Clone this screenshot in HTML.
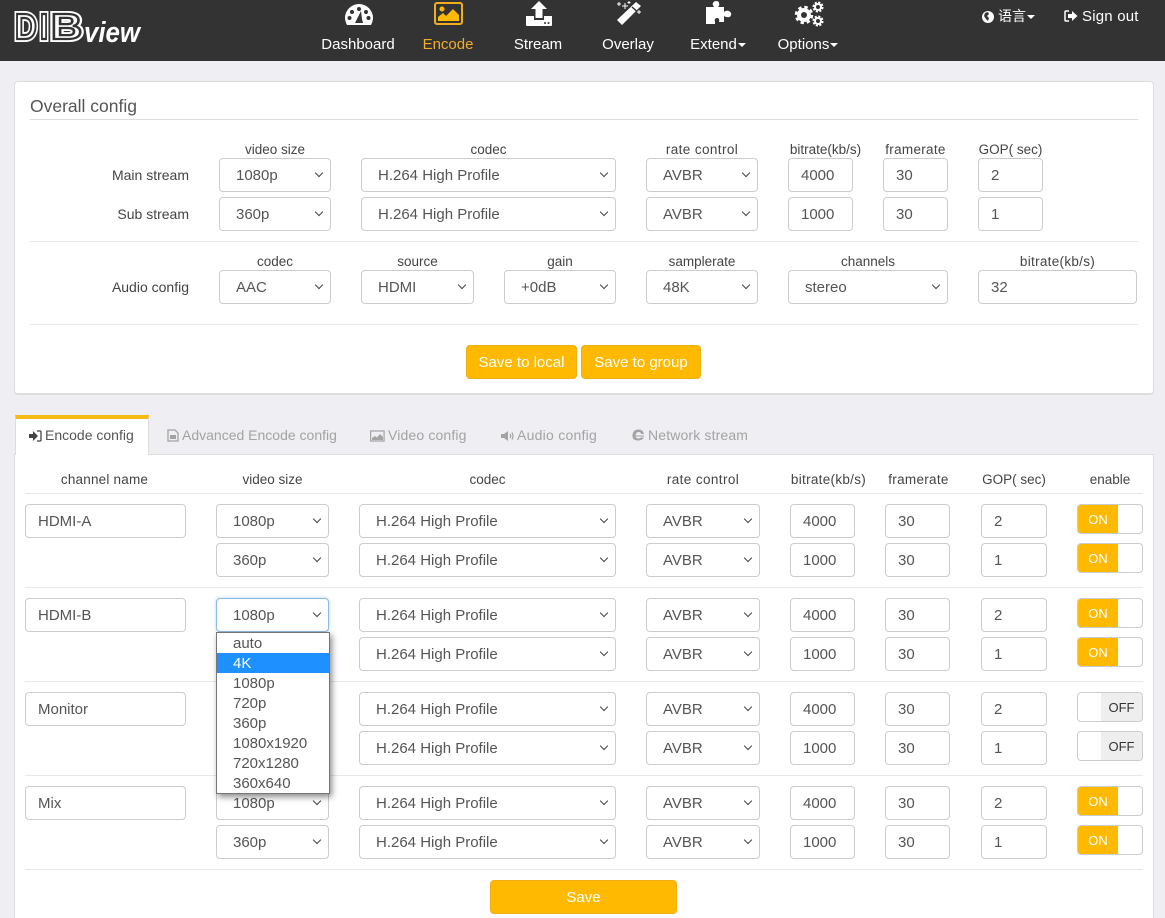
<!DOCTYPE html>
<html><head><meta charset="utf-8"><title>DIBview Encode</title>
<style>
*{box-sizing:border-box}
html,body{margin:0;padding:0}
html{width:1165px;height:918px;overflow:hidden}
body{width:1165px;height:918px;overflow:hidden;position:relative;background:#eeeef3;font-family:"Liberation Sans","Noto Sans CJK SC",sans-serif;font-size:15px;color:#555}
.a{position:absolute}
.nav{left:0;top:0;width:1165px;height:61px;background:#333}
.nl{position:absolute;top:35px;width:100px;text-align:center;color:#fff;font-size:15px;line-height:20px}
.caret{display:inline-block;width:0;height:0;border-left:4px solid transparent;border-right:4px solid transparent;border-top:4px solid #fff;vertical-align:middle;margin-left:1px}
.panel{position:absolute;background:#fff;border:1px solid #ddd}
.hr{position:absolute;height:1px;background:#e8e8e8}
.s,.i{position:absolute;height:34px;background:#fff;border:1px solid #ccc;border-radius:4px;line-height:34px;color:#555;font-size:15px;white-space:nowrap}
.s{padding-left:16px}
.i{padding-left:12px}
.s:after{content:"";position:absolute;right:8px;top:11px;width:5px;height:5px;border-right:1.8px solid #444;border-bottom:1.8px solid #444;transform:rotate(45deg)}
.l{position:absolute;text-align:center;font-size:13.5px;color:#444;line-height:18px;white-space:nowrap}
.w{letter-spacing:.4px}
.rl{position:absolute;left:60px;width:129px;text-align:right;font-size:14px;color:#444;line-height:20px}
.btn{position:absolute;height:34px;background:#ffb900;border:1px solid #efb014;border-radius:4px;color:#fff;text-align:center;line-height:33px;font-size:15px}
.tab{position:absolute;top:427px;font-size:14px;line-height:17px;color:#a3a3a3;white-space:nowrap}
.tab svg{vertical-align:-2px;margin-right:3px}
.sw{position:absolute;left:1077px;width:66px;height:30px;border:1px solid #ccc;border-radius:4px;background:#fff;overflow:hidden;font-size:13px;line-height:29px;text-align:center}
.on{position:absolute;left:0;top:0;width:40px;height:28px;background:#ffb900;color:#fff}
.off{position:absolute;right:0;top:0;width:41px;height:28px;background:#eee;color:#333}
.r{position:absolute;left:0;width:1165px;height:34px}
.m0{left:219px;width:112px}.m1{left:361px;width:255px}.m2{left:646px;width:112px}.m3{left:788px;width:65px}.m4{left:883px;width:65px}.m5{left:978px;width:65px}
.c0{left:216px;width:113px}.c1{left:359px;width:257px}.c2{left:646px;width:114px}.c3{left:790px;width:65px}.c4{left:885px;width:65px}.c5{left:981px;width:66px}
.dd{left:216px;top:632px;width:114px;height:162px;background:#fff;border:1px solid #767676;box-shadow:2px 3px 6px rgba(0,0,0,.45);z-index:5;font-size:15px;color:#555}
.dd div{height:20px;line-height:21px;padding-left:16px}
.dd .h{background:#1e90ff;color:#fff}
</style></head><body>
<div class="a nav"></div>
<svg class="a" style="left:10px;top:6px" width="140" height="42" viewBox="0 0 140 42">
<g font-family="Liberation Sans" font-size="36" font-weight="700" fill="none">
<g stroke="#fff" stroke-width="6"><text transform="translate(5 33) scale(.84 1)">D</text><text transform="translate(30 33) scale(.8 1)">I</text><text transform="translate(41 33) scale(1.2 1)">B</text></g>
<g stroke="#333" stroke-width="2.2"><text transform="translate(5 33) scale(.84 1)">D</text><text transform="translate(30 33) scale(.8 1)">I</text><text transform="translate(41 33) scale(1.2 1)">B</text></g>
</g>
<text x="74" y="36" font-family="Liberation Sans" font-style="italic" font-weight="700" font-size="29" fill="#fff" textLength="56" lengthAdjust="spacingAndGlyphs">view</text>
</svg>

<svg class="a" style="left:345px;top:4px" width="28" height="22" viewBox="0 0 28 22"><path d="M2 21Q0 17 0 14A14 14 0 0 1 28 14Q28 17 26 21Z" fill="#fff"/><g fill="#333"><circle cx="14" cy="5" r="2"/><circle cx="7" cy="8" r="2"/><circle cx="21" cy="8" r="2"/><circle cx="4.500" cy="14" r="2"/><circle cx="23.500" cy="14" r="2"/><path d="M16 7L17 15L18 19H10L12 15Z"/></g></svg>
<svg class="a" style="left:434px;top:2px" width="30" height="24" viewBox="0 0 30 24"><rect x="1" y="1" width="27" height="21" rx="2" fill="none" stroke="#f0ad1c" stroke-width="2"/><circle cx="8" cy="7" r="2.500" fill="#ffb900"/><path d="M4 19V15L9 11L12 14L19 7L25 13V19Z" fill="#ffb900"/></svg>
<svg class="a" style="left:526px;top:1px" width="26" height="25" viewBox="0 0 26 25"><path d="M13 0L21 8H16.500V17H9.500V8H5Z" fill="#fff"/><path d="M0 15H8V19H18V15H26V24Q26 25 25 25H1Q0 25 0 24Z" fill="#fff"/><circle cx="19" cy="22" r="1" fill="#333"/><circle cx="22.500" cy="22" r="1" fill="#333"/></svg>
<svg class="a" style="left:616px;top:0" width="27" height="26" viewBox="0 0 27 26"><path d="M20 2L25 6L6 25L1 20Z" fill="#fff"/><path d="M16 7L20.500 11" stroke="#333" stroke-width="1.500"/><path d="M3 2V6M1 4H5M9 3V9M6 6H12M13 1V4M11.500 2.500H14.500M23 10V14M21 12H25" stroke="#fff" stroke-width="1"/></svg>
<svg class="a" style="left:705px;top:1px" width="28" height="24" viewBox="0 0 28 24"><path d="M1 6H9Q7 3 8 2Q9 0 11 0Q14 0 14 2Q15 4 13 6H19V11Q21 9 24 10Q27 12 26 14Q25 17 22 16Q20 16 19 15V21H14Q15 17 12 17Q9 17 10 21V23H1Z" fill="#fff"/></svg>
<svg class="a" style="left:793px;top:1px" width="31" height="28" viewBox="0 0 31 28" fill="none" stroke="#fff"><circle cx="11" cy="14" r="5" stroke-width="4"/><circle cx="11" cy="14" r="8" stroke-width="2.500" stroke-dasharray="3.400 2.900"/><circle cx="25" cy="6" r="3" stroke-width="2"/><circle cx="25" cy="6" r="4.700" stroke-width="1.700" stroke-dasharray="2.200 1.500"/><circle cx="25" cy="20" r="3" stroke-width="2"/><circle cx="25" cy="20" r="4.700" stroke-width="1.700" stroke-dasharray="2.200 1.500"/></svg>
<div class="nl" style="left:308px">Dashboard</div>
<div class="nl" style="left:398px;color:#f0ad2c">Encode</div>
<div class="nl" style="left:488px">Stream</div>
<div class="nl" style="left:578px">Overlay</div>
<div class="nl" style="left:668px">Extend<span class="caret"></span></div>
<div class="nl" style="left:758px">Options<span class="caret"></span></div>
<svg class="a" style="left:982px;top:11px" width="12" height="12" viewBox="0 0 12 12"><circle cx="6" cy="6" r="6" fill="#fff"/><path d="M3 2L6 1L7 3L5 5L7 7L6 10L4 8L2 5Z" fill="#333"/></svg>
<div class="a" style="left:998px;top:6px;color:#fff;font-size:14px;line-height:20px;white-space:nowrap">语言<span class="caret"></span></div>
<svg class="a" style="left:1064px;top:10px" width="14" height="12" viewBox="0 0 14 12"><path d="M5 1H2Q1 1 1 2V10Q1 11 2 11H5" fill="none" stroke="#fff" stroke-width="1.500"/><path d="M4 4H8V1L13.500 6L8 11V8H4Z" fill="#fff"/></svg>
<div class="a" style="left:1082px;top:7px;color:#fff;font-size:15px;letter-spacing:.2px;line-height:20px;white-space:nowrap">Sign out</div>

<div class="panel" style="left:14px;top:81px;width:1140px;height:314px;border-radius:4px;border-bottom:2px solid #ddd"></div>
<div class="a" style="left:30px;top:95px;font-size:17.5px;line-height:22px;color:#555">Overall config</div>
<div class="hr" style="left:30px;top:119px;width:1108px;background:#ddd"></div>

<div class="l" style="left:219px;top:141px;width:112px">video size</div>
<div class="l" style="left:361px;top:141px;width:255px">codec</div>
<div class="l w" style="left:646px;top:141px;width:112px">rate control</div>
<div class="l" style="left:783px;top:141px;width:85px">bitrate(kb/s)</div>
<div class="l" style="left:883px;top:141px;width:65px;letter-spacing:.3px">framerate</div>
<div class="l" style="left:978px;top:141px;width:65px">GOP( sec)</div>

<div class="rl" style="top:165px">Main stream</div>
<div class="r" style="top:158px"><div class="s m0">1080p</div><div class="s m1">H.264 High Profile</div><div class="s m2">AVBR</div><div class="i m3">4000</div><div class="i m4">30</div><div class="i m5">2</div></div>
<div class="rl" style="top:204px">Sub stream</div>
<div class="r" style="top:197px"><div class="s m0">360p</div><div class="s m1">H.264 High Profile</div><div class="s m2">AVBR</div><div class="i m3">1000</div><div class="i m4">30</div><div class="i m5">1</div></div>
<div class="hr" style="left:30px;top:241px;width:1108px"></div>

<div class="l" style="left:219px;top:253px;width:112px">codec</div>
<div class="l" style="left:361px;top:253px;width:113px">source</div>
<div class="l" style="left:504px;top:253px;width:112px">gain</div>
<div class="l" style="left:646px;top:253px;width:112px">samplerate</div>
<div class="l" style="left:788px;top:253px;width:160px">channels</div>
<div class="l" style="left:978px;top:253px;width:159px;letter-spacing:.3px">bitrate(kb/s)</div>
<div class="rl" style="top:277px">Audio config</div>
<div class="r" style="top:270px"><div class="s m0">AAC</div><div class="s" style="left:361px;width:113px">HDMI</div><div class="s" style="left:504px;width:112px">+0dB</div><div class="s m2">48K</div><div class="s" style="left:788px;width:160px">stereo</div><div class="i" style="left:978px;width:159px">32</div></div>
<div class="hr" style="left:30px;top:324px;width:1108px"></div>
<div class="btn" style="left:466px;top:345px;width:111px">Save to local</div>
<div class="btn" style="left:581px;top:345px;width:120px">Save to group</div>

<div class="panel" style="left:14px;top:454px;width:1140px;height:464px;border-bottom:0"></div>
<div class="a" style="left:15px;top:415px;width:134px;height:40px;background:#fff;border-top:4px solid #f5bc14;border-right:1px solid #ddd;border-left:1px solid #ddd"></div>

<div class="tab" style="left:29px;color:#555"><svg width="13" height="12" viewBox="0 0 13 12"><path d="M0 4H4V1L9 6L4 11V8H0Z" fill="#444"/><path d="M8 1H11Q12 1 12 2V10Q12 11 11 11H8" fill="none" stroke="#444" stroke-width="1.300"/></svg>Encode config</div>
<div class="tab" style="left:167px"><svg width="12" height="13" viewBox="0 0 12 13"><path d="M1 1H8L11 4V12H1Z" fill="none" stroke="#a3a3a3" stroke-width="1.300"/><rect x="3" y="6" width="6" height="4" fill="#a3a3a3"/></svg>Advanced Encode config</div>
<div class="tab" style="left:370px;letter-spacing:.15px"><svg width="15" height="12" viewBox="0 0 15 12"><rect x=".6" y="1" width="13.500" height="10" fill="none" stroke="#a3a3a3" stroke-width="1.200"/><path d="M2 10V8L5 6L7 7.500L10 4L13 7V10Z" fill="#a3a3a3"/></svg>Video config</div>
<div class="tab" style="left:501px;letter-spacing:.25px"><svg width="13" height="12" viewBox="0 0 13 12"><path d="M0 4H3L7 1V11L3 8H0Z" fill="#a3a3a3"/><path d="M9 4Q10.500 6 9 8M11 2.500Q13 6 11 9.500" fill="none" stroke="#a3a3a3" stroke-width="1.200"/></svg>Audio config</div>
<div class="tab" style="left:631px;letter-spacing:.15px"><svg width="14" height="14" viewBox="0 0 14 14"><path d="M11 7.500H4.500Q5 4 7.500 4Q10 4 10 6H13Q12 1.500 7.500 1.500Q2 1.500 1.500 7Q1 12.500 7 12.500Q11 12.500 13 9.500H10Q9 10.500 7.500 10.500Q5 10.500 4.500 8.500H13V7.500Z" fill="#a3a3a3"/></svg>Network stream</div>

<div class="l" style="left:24px;top:471px;width:161px;letter-spacing:.2px">channel name</div>
<div class="l" style="left:216px;top:471px;width:113px">video size</div>
<div class="l" style="left:359px;top:471px;width:257px">codec</div>
<div class="l w" style="left:646px;top:471px;width:114px">rate control</div>
<div class="l" style="left:786px;top:471px;width:85px;letter-spacing:.3px">bitrate(kb/s)</div>
<div class="l" style="left:885px;top:471px;width:67px;letter-spacing:.3px">framerate</div>
<div class="l" style="left:981px;top:471px;width:66px">GOP( sec)</div>
<div class="l" style="left:1077px;top:471px;width:66px">enable</div>
<div class="hr" style="left:25px;top:493px;width:1118px"></div>

<div class="i" style="left:25px;top:504px;width:161px">HDMI-A</div>
<div class="r" style="top:504px"><div class="s c0">1080p</div><div class="s c1">H.264 High Profile</div><div class="s c2">AVBR</div><div class="i c3">4000</div><div class="i c4">30</div><div class="i c5">2</div></div>
<div class="r" style="top:543px"><div class="s c0">360p</div><div class="s c1">H.264 High Profile</div><div class="s c2">AVBR</div><div class="i c3">1000</div><div class="i c4">30</div><div class="i c5">1</div></div>
<div class="sw" style="top:504px"><div class="on">ON</div></div>
<div class="sw" style="top:543px"><div class="on">ON</div></div>
<div class="hr" style="left:25px;top:587px;width:1118px"></div>

<div class="i" style="left:25px;top:598px;width:161px">HDMI-B</div>
<div class="r" style="top:598px"><div class="s c0" style="border-color:#8ebbe6;box-shadow:0 0 3px rgba(102,175,233,.5)">1080p</div><div class="s c1">H.264 High Profile</div><div class="s c2">AVBR</div><div class="i c3">4000</div><div class="i c4">30</div><div class="i c5">2</div></div>
<div class="r" style="top:637px"><div class="s c1">H.264 High Profile</div><div class="s c2">AVBR</div><div class="i c3">1000</div><div class="i c4">30</div><div class="i c5">1</div></div>
<div class="sw" style="top:598px"><div class="on">ON</div></div>
<div class="sw" style="top:637px"><div class="on">ON</div></div>
<div class="hr" style="left:25px;top:681px;width:1118px"></div>

<div class="i" style="left:25px;top:692px;width:161px">Monitor</div>
<div class="r" style="top:692px"><div class="s c1">H.264 High Profile</div><div class="s c2">AVBR</div><div class="i c3">4000</div><div class="i c4">30</div><div class="i c5">2</div></div>
<div class="r" style="top:731px"><div class="s c1">H.264 High Profile</div><div class="s c2">AVBR</div><div class="i c3">1000</div><div class="i c4">30</div><div class="i c5">1</div></div>
<div class="sw" style="top:692px"><div class="off">OFF</div></div>
<div class="sw" style="top:731px"><div class="off">OFF</div></div>
<div class="hr" style="left:25px;top:775px;width:1118px"></div>

<div class="i" style="left:25px;top:786px;width:161px">Mix</div>
<div class="r" style="top:786px"><div class="s c0">1080p</div><div class="s c1">H.264 High Profile</div><div class="s c2">AVBR</div><div class="i c3">4000</div><div class="i c4">30</div><div class="i c5">2</div></div>
<div class="r" style="top:825px"><div class="s c0">360p</div><div class="s c1">H.264 High Profile</div><div class="s c2">AVBR</div><div class="i c3">1000</div><div class="i c4">30</div><div class="i c5">1</div></div>
<div class="sw" style="top:786px"><div class="on">ON</div></div>
<div class="sw" style="top:825px"><div class="on">ON</div></div>
<div class="hr" style="left:25px;top:869px;width:1118px"></div>

<div class="a dd"><div>auto</div><div class="h">4K</div><div>1080p</div><div>720p</div><div>360p</div><div>1080x1920</div><div>720x1280</div><div>360x640</div></div>
<div class="btn" style="left:490px;top:880px;width:187px">Save</div>
</body></html>
